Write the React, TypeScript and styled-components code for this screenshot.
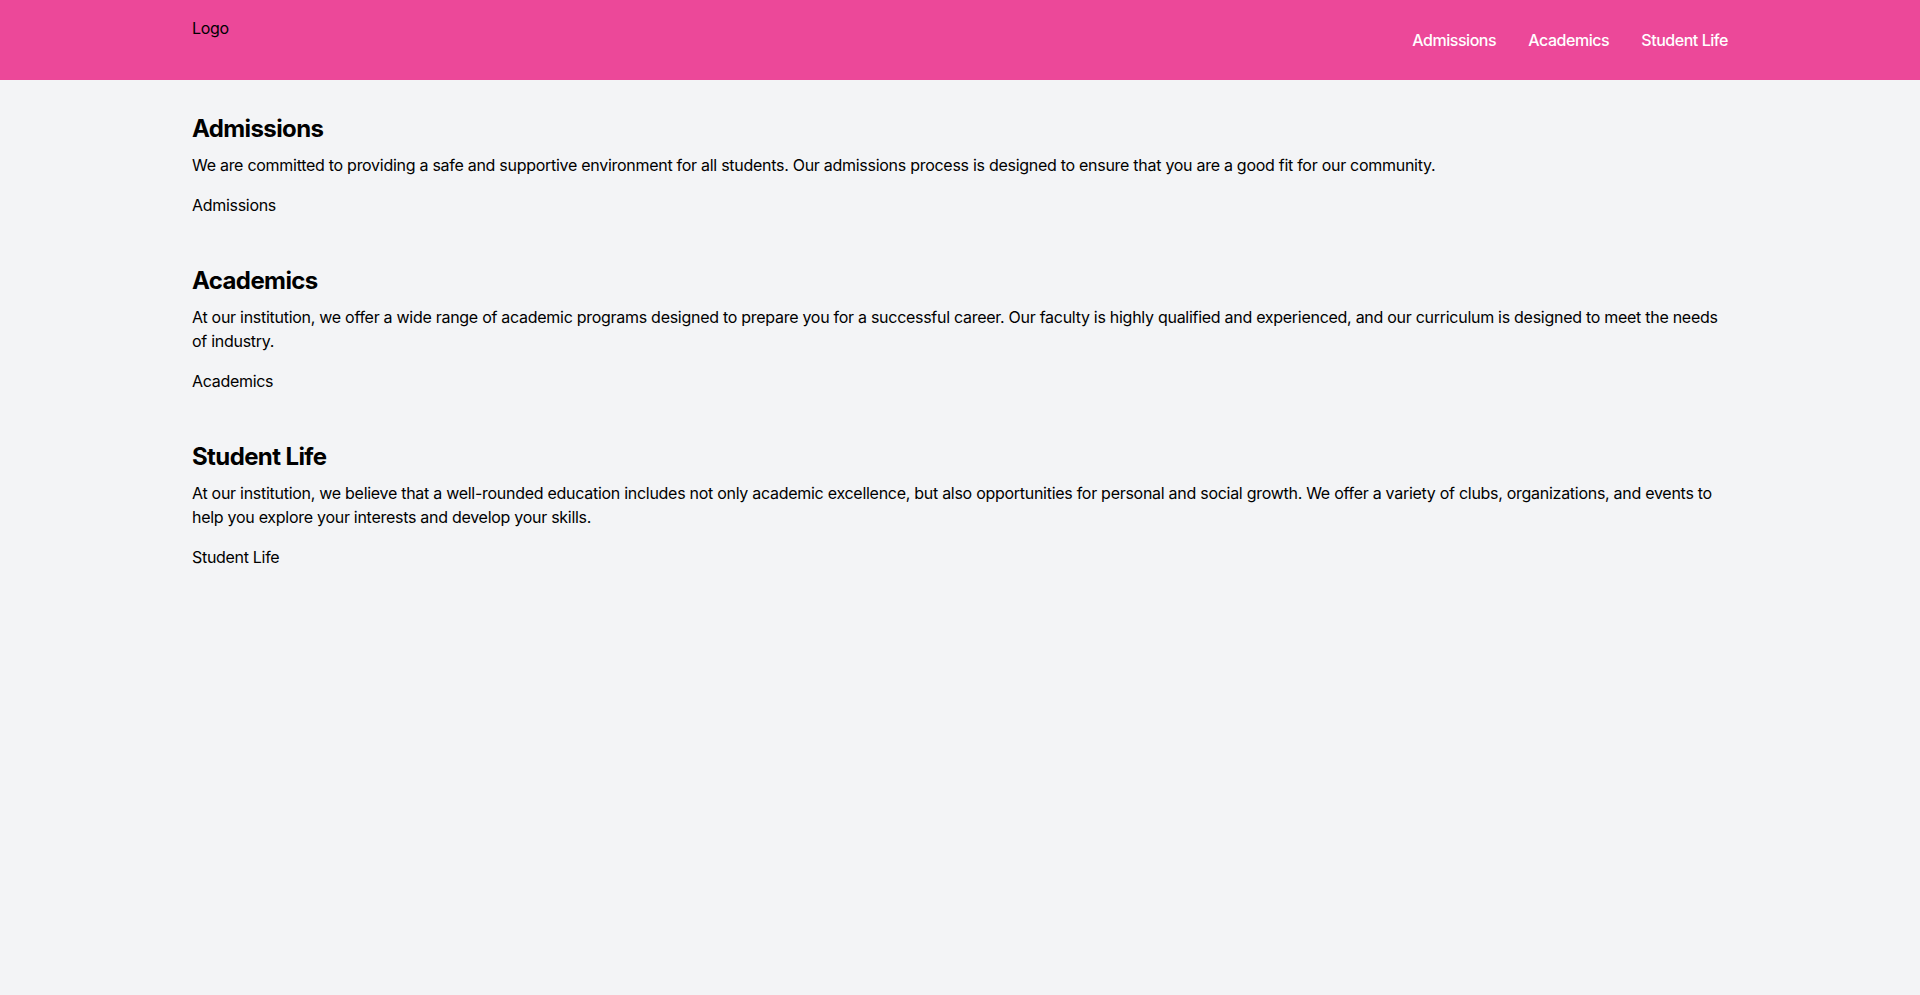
import React from "react";
import styled, { createGlobalStyle } from "styled-components";

const GlobalStyle = createGlobalStyle`
  * { box-sizing: border-box; }
  html, body { margin: 0; padding: 0; }
  body {
    background: #f3f4f6;
    font-family: Inter, "Noto Sans", "Liberation Sans", sans-serif;
    color: #000;
    -webkit-font-smoothing: antialiased;
  }
`;

const Page = styled.div`
  min-height: 995px;
  background: #f3f4f6;
`;

const Header = styled.header`
  background: #ec4899;
  height: 80px;
`;

const HeaderInner = styled.div`
  max-width: 1536px;
  margin: 0 auto;
  height: 100%;
  display: flex;
  justify-content: space-between;
  align-items: flex-start;
`;

const Logo = styled.div`
  padding-top: 16px;
  font-size: 16px;
  line-height: 24px;
  letter-spacing: -0.3px;
  color: #000;
`;

const Nav = styled.nav`
  display: flex;
  gap: 32px;
  align-self: center;
`;

const NavLink = styled.a`
  color: #fff;
  font-size: 16px;
  line-height: 24px;
  font-weight: 500;
  letter-spacing: -0.45px;
  text-decoration: none;
`;

const Main = styled.main`
  max-width: 1536px;
  margin: 0 auto;
  padding-top: 33px;
  display: flex;
  flex-direction: column;
  gap: 48px;
`;

const Section = styled.section`
  display: flex;
  flex-direction: column;
`;

const Heading = styled.h2`
  margin: 0 0 8px;
  font-size: 24px;
  line-height: 32px;
  font-weight: 700;
  letter-spacing: -0.6px;
`;

const Text = styled.p`
  margin: 0 0 16px;
  font-size: 16px;
  line-height: 24px;
  letter-spacing: -0.28px;
`;

const SectionLink = styled.a`
  color: #000;
  font-size: 16px;
  line-height: 24px;
  letter-spacing: -0.3px;
  text-decoration: none;
`;

const sections = [
  {
    title: "Admissions",
    text: "We are committed to providing a safe and supportive environment for all students. Our admissions process is designed to ensure that you are a good fit for our community.",
  },
  {
    title: "Academics",
    text: "At our institution, we offer a wide range of academic programs designed to prepare you for a successful career. Our faculty is highly qualified and experienced, and our curriculum is designed to meet the needs of industry.",
  },
  {
    title: "Student Life",
    text: "At our institution, we believe that a well-rounded education includes not only academic excellence, but also opportunities for personal and social growth. We offer a variety of clubs, organizations, and events to help you explore your interests and develop your skills.",
  },
];

export default function App() {
  return (
    <Page>
      <GlobalStyle />
      <Header>
        <HeaderInner>
          <Logo>Logo</Logo>
          <Nav>
            {sections.map((s) => (
              <NavLink key={s.title} href="#">
                {s.title}
              </NavLink>
            ))}
          </Nav>
        </HeaderInner>
      </Header>
      <Main>
        {sections.map((s) => (
          <Section key={s.title}>
            <Heading>{s.title}</Heading>
            <Text>{s.text}</Text>
            <SectionLink href="#">{s.title}</SectionLink>
          </Section>
        ))}
      </Main>
    </Page>
  );
}
